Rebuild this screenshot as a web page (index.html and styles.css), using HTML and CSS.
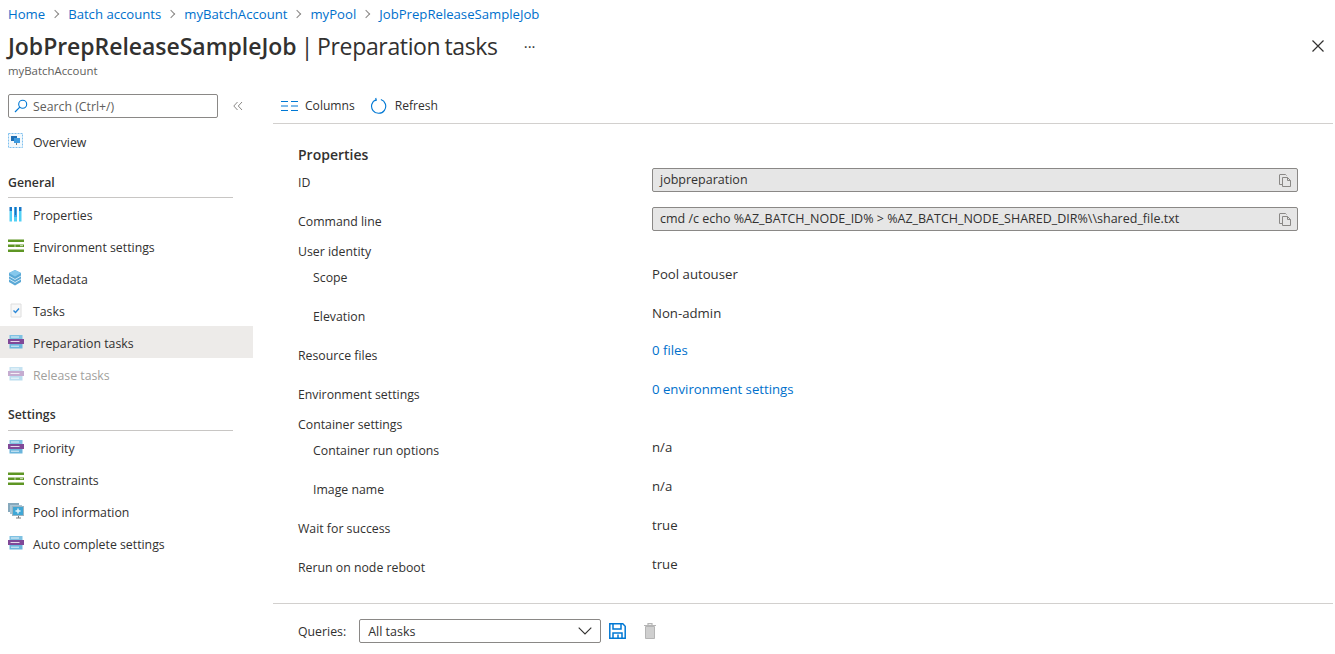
FILE: index.html
```html
<!DOCTYPE html>
<html lang="en">
<head>
    <meta charset="UTF-8">
    <meta name="viewport" content="width=device-width, initial-scale=1.0">
    <title>Preparation tasks</title>
    <link rel="stylesheet" href="styles.css">
</head>
<body>
    <svg class="sprites" width="0" height="0">
        <symbol id="task" viewBox="0 0 16 16">
            <rect x="1.5" y="1" width="13" height="4" fill="#7fc1e2"/>
            <rect x="0" y="5" width="16" height="5" fill="#804998"/>
            <rect x="1.5" y="10" width="13" height="4.5" fill="#6bb5dc"/>
            <path d="M3 3h8M2.5 7.5h9M3 12.2h8" stroke="#fff" stroke-width=".8"/>
        </symbol>
        <symbol id="bars" viewBox="0 0 16 16">
            <path d="M0 1.500h16v2.500H0zM0 6.500h16v2.500H0zM0 11.500h16v2.500H0z" fill="#5e9624"/>
            <path d="M12 7.700h3" stroke="#d6e6c2"/>
            <path d="M7 6.500v2.500" stroke="#fff" stroke-width=".6"/>
        </symbol>
        <symbol id="copy" viewBox="0 0 12 13">
            <path d="M.5 1v9.500h3M.5.5h6l1 1" fill="none" stroke="#8a8886"/>
            <path d="M3.500 3.500h5l3 3v6h-8z M8.500 3.500v3h3" fill="#e6e6e6" stroke="#8a8886"/>
        </symbol>
    </svg>

    <nav class="breadcrumb">
        <a href="#">Home</a><span class="sep"></span>
        <a href="#">Batch accounts</a><span class="sep"></span>
        <a href="#">myBatchAccount</a><span class="sep"></span>
        <a href="#">myPool</a><span class="sep"></span>
        <a href="#">JobPrepReleaseSampleJob</a>
    </nav>

    <header class="page-head">
        <div class="title-row">
            <h1><b>JobPrepReleaseSampleJob</b> | Preparation tasks</h1>
            <span class="more">···</span>
            <svg class="close" width="14" height="14" viewBox="0 0 14 14"><path d="M1.500 1.500l11 11M12.500 1.500l-11 11" stroke="#323130" stroke-width="1.200"/></svg>
        </div>
        <div class="subtitle">myBatchAccount</div>
    </header>

    <div class="layout">
        <aside class="sidebar">
            <div class="search-row">
                <div class="search">
                    <svg width="14" height="14" viewBox="0 0 14 14"><circle cx="8.700" cy="5.300" r="4" fill="none" stroke="#0078d4" stroke-width="1.100"/><path d="M5.800 8.200L1 13" stroke="#0078d4" stroke-width="1.200"/></svg>
                    <span>Search (Ctrl+/)</span>
                </div>
                <svg class="collapse" width="10" height="10" viewBox="0 0 10 10"><path d="M4.500 1L.8 5l3.700 4M9 1L5.300 5 9 9" fill="none" stroke="#8a8886"/></svg>
            </div>

            <a class="nav-item" href="#">
                <svg class="nav-icon" width="16" height="16" viewBox="0 0 16 16">
                    <rect x=".5" y=".5" width="14" height="14" fill="#f3f9fd" stroke="#7fc0ee" stroke-dasharray="2 1"/>
                    <rect x="3" y="3" width="6" height="5" fill="#1f6fb5"/>
                    <rect x="6" y="5" width="6" height="5" fill="#3e9be0"/>
                    <path d="M8.500 10v2" stroke="#7a7a7a"/>
                </svg>
                Overview
            </a>

            <h3 class="nav-title">General</h3>
            <a class="nav-item" href="#">
                <svg class="nav-icon" width="16" height="16" viewBox="0 0 16 16">
                    <path d="M1.500 5h2.500v10.500H1.500zM11 5h2.500v10.500H11zM6 11h3v4.500H6z" fill="#50d0f5"/>
                    <path d="M1.500 1h2.500v4H1.500zM11 1h2.500v4H11z" fill="#1a78c8"/>
                    <path d="M6 1h3v10H6z" fill="#3aa5e8"/>
                    <path d="M7 1h1v8H7z" fill="#1f6fb5"/>
                </svg>
                Properties
            </a>
            <a class="nav-item" href="#"><svg class="nav-icon" width="16" height="16"><use href="#bars"/></svg>Environment settings</a>
            <a class="nav-item" href="#">
                <svg class="nav-icon" width="16" height="16" viewBox="0 0 16 16">
                    <path d="M7 0L1 3v9l6 3.500 6-3.500V3z" fill="#5ba9d6"/>
                    <path d="M7 0L1 3l6 3.500L13 3z" fill="#86c8ec"/>
                    <path d="M1 6l6 3.500L13 6M1 9l6 3.500L13 9" fill="none" stroke="#dff1fb" stroke-width=".9"/>
                </svg>
                Metadata
            </a>
            <a class="nav-item" href="#">
                <svg class="nav-icon" width="16" height="16" viewBox="0 0 16 16">
                    <path d="M3 2h10v13H3z" fill="#f7f7f7" stroke="#dedede"/>
                    <path d="M5.500 8.500l2 2 3.500-4" fill="none" stroke="#2b88d8" stroke-width="1.400"/>
                </svg>
                Tasks
            </a>
            <a class="nav-item active" href="#"><svg class="nav-icon" width="16" height="16"><use href="#task"/></svg>Preparation tasks</a>
            <a class="nav-item disabled" href="#"><svg class="nav-icon" width="16" height="16"><use href="#task"/></svg>Release tasks</a>

            <h3 class="nav-title">Settings</h3>
            <a class="nav-item" href="#"><svg class="nav-icon" width="16" height="16"><use href="#task"/></svg>Priority</a>
            <a class="nav-item" href="#"><svg class="nav-icon" width="16" height="16"><use href="#bars"/></svg>Constraints</a>
            <a class="nav-item" href="#">
                <svg class="nav-icon" width="16" height="16" viewBox="0 0 16 16">
                    <rect x="0" y="0" width="11" height="9" fill="#86a9bd"/>
                    <rect x="2" y="2" width="12" height="9" fill="#a9c6d6"/>
                    <rect x="4.500" y="3.500" width="11" height="9" fill="#3fa7d6" stroke="#9db4c0"/>
                    <path d="M10 5.500v5M7.500 8h5" stroke="#e8f6fc" stroke-width="1.400"/>
                    <path d="M8 15h5M10.500 13v2" stroke="#7a7a7a"/>
                </svg>
                Pool information
            </a>
            <a class="nav-item" href="#"><svg class="nav-icon" width="16" height="16"><use href="#task"/></svg>Auto complete settings</a>
        </aside>

        <main class="content">
            <div class="toolbar">
                <span class="tool">
                    <svg width="17" height="12" viewBox="0 0 17 12"><path d="M0 1.500h7M0 6h7M0 10.500h7M10 1.500h7M10 6h7M10 10.500h7" stroke="#0078d4" stroke-width="1.100"/></svg>
                    Columns
                </span>
                <span class="tool refresh">
                    <svg width="17" height="18" viewBox="0 0 18 18"><path d="M6.500 2.200a7.500 7.500 0 1 0 5-.1M6 .5l.7 2.200-2.400.9" fill="none" stroke="#0078d4" stroke-width="1.200"/></svg>
                    Refresh
                </span>
            </div>

            <section class="props">
                <h2>Properties</h2>
                <div class="row field">
                    <span class="label">ID</span>
                    <div class="readonly">jobpreparation<svg width="12" height="13"><use href="#copy"/></svg></div>
                </div>
                <div class="row field">
                    <span class="label">Command line</span>
                    <div class="readonly">cmd /c echo %AZ_BATCH_NODE_ID% &gt; %AZ_BATCH_NODE_SHARED_DIR%\\shared_file.txt<svg width="12" height="13"><use href="#copy"/></svg></div>
                </div>
                <div class="group user">User identity</div>
                <div class="row sub"><span class="label">Scope</span><span class="value">Pool autouser</span></div>
                <div class="row sub"><span class="label">Elevation</span><span class="value">Non-admin</span></div>
                <div class="row link"><span class="label">Resource files</span><a class="value" href="#">0 files</a></div>
                <div class="row link"><span class="label">Environment settings</span><a class="value" href="#">0 environment settings</a></div>
                <div class="group container-set">Container settings</div>
                <div class="row sub"><span class="label">Container run options</span><span class="value">n/a</span></div>
                <div class="row sub"><span class="label">Image name</span><span class="value">n/a</span></div>
                <div class="row"><span class="label">Wait for success</span><span class="value">true</span></div>
                <div class="row"><span class="label">Rerun on node reboot</span><span class="value">true</span></div>
            </section>

            <footer class="queries">
                <span>Queries:</span>
                <div class="select">All tasks
                    <svg width="14" height="8" viewBox="0 0 14 8"><path d="M.7.7L7 7l6.300-6.300" fill="none" stroke="#323130" stroke-width="1.100"/></svg>
                </div>
                <svg width="17" height="16" viewBox="0 0 17 16"><path d="M.8.8h13l2.400 2.400v12H.8z M4 1v5h8V1 M4 15v-5h9v5 M9 11.500V15" fill="none" stroke="#0078d4" stroke-width="1.500"/></svg>
                <svg class="trash" width="14" height="16" viewBox="0 0 14 16"><path d="M1 2.500h12M5 2.500V.6h4v1.900" fill="none" stroke="#b5b5b5" stroke-width="1.200"/><path d="M2.500 3.500h9v12h-9z" fill="#cfcfcf" stroke="#b5b5b5"/></svg>
            </footer>
        </main>
    </div>
</body>
</html>
```

FILE: styles.css
```css
* {
    box-sizing: border-box;
}

body {
    margin: 0;
    font-family: "Open Sans", "Noto Sans", Arial, sans-serif;
    font-size: 12.3px;
    color: #323130;
    background-color: #fff;
    overflow: hidden;
}

a {
    text-decoration: none;
    color: #0070cc;
}

.sprites {
    display: block;
}

.breadcrumb {
    display: flex;
    align-items: center;
    height: 28px;
    padding-left: 8px;
    font-size: 13.15px;
}

.sep {
    width: 6px;
    height: 6px;
    margin: 0 10px 0 7px;
    border-top: 1px solid #8a8886;
    border-right: 1px solid #8a8886;
    transform: rotate(45deg);
}

.page-head {
    padding: 0 8px;
}

.title-row {
    display: flex;
    align-items: center;
    height: 36px;
}

h1 {
    margin: 0;
    font-size: 23px;
    font-weight: 400;
    letter-spacing: -0.35px;
    word-spacing: -1.5px;
}

h1 b {
    font-weight: 600;
    letter-spacing: -0.04px;
}

.more {
    margin-left: 26px;
    font-size: 15px;
}

.close {
    margin-left: auto;
    margin-right: 2px;
}

.subtitle {
    font-size: 11.4px;
    color: #605e5c;
    line-height: 14px;
}

.layout {
    display: flex;
    margin-top: 16px;
}

.sidebar {
    width: 273px;
    padding-right: 20px;
}

.search-row {
    display: flex;
    align-items: center;
    padding-left: 8px;
    height: 24px;
}

.search {
    display: flex;
    align-items: center;
    gap: 5px;
    width: 210px;
    height: 24px;
    padding-left: 5px;
    border: 1px solid #8a8886;
    border-radius: 2px;
    color: #605e5c;
}

.collapse {
    margin-left: 15px;
}

.nav-item {
    display: flex;
    align-items: center;
    height: 32px;
    padding: 2px 0 0 8px;
    color: #323130;
}

.search-row + .nav-item {
    margin-top: 7px;
}

.nav-icon {
    flex: none;
    margin: -2px 9px 0 0;
}

.nav-item.active {
    background-color: #edebe9;
}

.nav-item.disabled {
    color: #a19f9d;
}

.nav-item.disabled .nav-icon {
    opacity: 0.45;
}

.nav-title {
    margin: 8px 0 0 8px;
    width: 225px;
    height: 33px;
    padding-top: 9px;
    font-size: 12.3px;
    font-weight: 600;
    border-bottom: 1px solid #c8c6c4;
}

.disabled + .nav-title {
    margin-top: 7px;
    height: 34px;
}

.content {
    flex: 1;
    min-width: 0;
    margin-right: 2px;
}

.toolbar {
    display: flex;
    align-items: center;
    gap: 15px;
    height: 36px;
    margin-top: -6px;
    padding: 0 8px;
    border-bottom: 1px solid #d2d0ce;
    font-size: 12.1px;
}

.tool {
    display: flex;
    align-items: center;
    gap: 7px;
}

.tool.refresh {
    gap: 8px;
}

.props {
    padding: 21px 35px 0 25px;
    height: 480px;
    border-bottom: 1px solid #d2d0ce;
}

h2 {
    margin: 0 0 3px;
    height: 20px;
    font-size: 14px;
    font-weight: 600;
    line-height: 20px;
}

.row {
    display: grid;
    grid-template-columns: 354px 1fr;
    height: 39px;
    line-height: 18px;
}

.label {
    padding-top: 4px;
}

.field .label {
    padding-top: 6px;
}

.sub .label {
    padding-left: 15px;
}

.value {
    font-size: 13.2px;
}

.link .value {
    margin-top: -2px;
}

.group {
    height: 22px;
    line-height: 18px;
}

.group.user {
    margin-top: -3px;
}

.group.container-set {
    margin-top: -5px;
}

.readonly {
    display: flex;
    align-items: center;
    justify-content: space-between;
    height: 24px;
    padding: 0 6px 0 7px;
    font-size: 12.5px;
    background-color: #e6e6e6;
    border: 1px solid #8a8886;
    border-radius: 2px;
}

.queries {
    display: flex;
    align-items: center;
    height: 54px;
    padding-left: 25px;
}

.select {
    display: flex;
    align-items: center;
    justify-content: space-between;
    width: 242px;
    height: 24px;
    margin: 0 8px 0 13px;
    padding: 0 8px;
    font-size: 12.5px;
    border: 1px solid #8a8886;
    border-radius: 2px;
}

.trash {
    margin-left: 17px;
}
```
